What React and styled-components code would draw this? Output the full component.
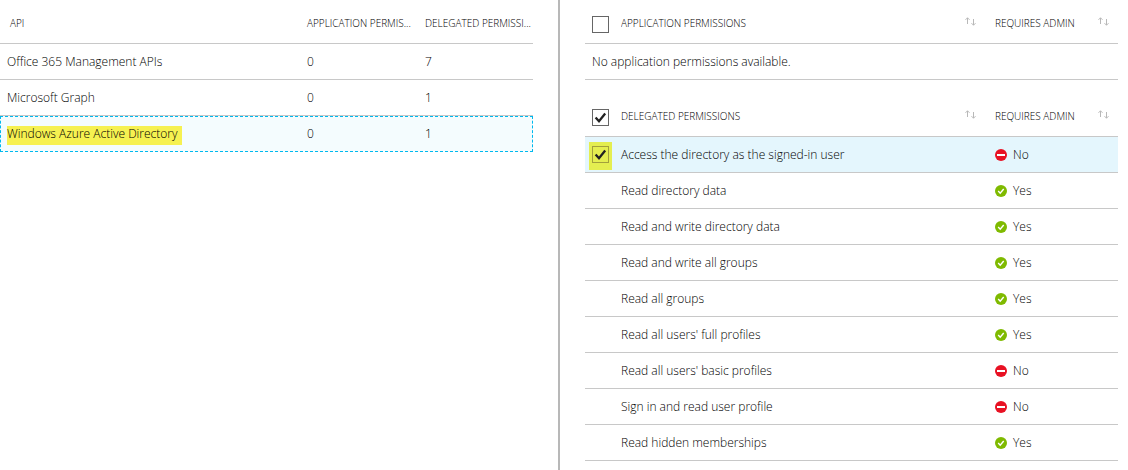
import React from "react";
import styled, { createGlobalStyle } from "styled-components";

const GlobalStyle = createGlobalStyle`
  * { box-sizing: border-box; }
  body {
    margin: 0;
    background: #fff;
    color: #000;
    font-family: "Open Sans", "Noto Sans", sans-serif;
    font-size: 12px;
    font-weight: 300;
    line-height: 16px;
  }
`;

const Layout = styled.main`
  display: grid;
  grid-template-columns: minmax(0, 560fr) minmax(0, 568fr);
  min-height: 100vh;
`;

const Panel = styled.section`
  padding: ${(p) => (p.$side === "left" ? "0 25px 0 0" : "0 10px 0 25px")};
  border-right: ${(p) => (p.$side === "left" ? "2px solid #b8b8b8" : "0")};
`;

const Table = styled.table`
  width: 100%;
  table-layout: fixed;
  border-collapse: separate;
  border-spacing: 0;
  margin-bottom: 13px;
`;

const Col = styled.col`
  width: ${(p) => p.$width || "auto"};
`;

const HeadCell = styled.th`
  height: 44px;
  padding: ${(p) => (p.$check ? "6px" : "3px")} ${(p) => p.$end || "4px"} 0 ${(p) => p.$indent || "7px"};
  border-bottom: 1px solid #c8c8c8;
  font-size: 10px;
  font-weight: 300;
  text-align: left;
  white-space: nowrap;
  overflow: hidden;
  text-overflow: ellipsis;
`;

const Cell = styled.td`
  height: 36px;
  padding: ${(p) => (p.$check ? "2px" : "0")} ${(p) => p.$indent || "7px"} 0;
  border-bottom: 1px solid #c8c8c8;
`;

const Row = styled.tr`
  background: ${(p) => (p.$selected ? "#e4f6fd" : "transparent")};
`;

const FocusedRow = styled.tr`
  background: #f4fcfe;
  outline: 1px dashed #00b9ee;
  outline-offset: -1px;

  ${Cell} { border-bottom-color: transparent; }
`;

const Highlight = styled.mark`
  display: inline-block;
  margin-bottom: -3px;
  padding: 0 4px 3px 0;
  background: #f6f151;
  color: inherit;
  vertical-align: top;
`;

const HeadContent = styled.div`
  display: flex;
  align-items: center;
  justify-content: space-between;
`;

const SortButton = styled.button`
  display: flex;
  padding: 0 0 3px;
  border: 0;
  background: none;
  color: #b8b8b8;
`;

const CheckLabel = styled.label`
  display: flex;
  width: max-content;
  padding: ${(p) => (p.$marked ? "4px 3px 7px" : "0 3px")};
  background: ${(p) => (p.$marked ? "#e4ee50" : "transparent")};
`;

const CheckFrame = styled.span`
  display: grid;
  width: 17px;
  height: 17px;

  > * { grid-area: 1 / 1; }
  > svg { pointer-events: none; }
  > input:not(:checked) + svg { visibility: hidden; }
`;

const CheckInput = styled.input`
  appearance: none;
  width: 17px;
  height: 17px;
  margin: 0;
  border: 1px solid ${(p) => (p.$marked ? "#a2a03c" : "#666")};
  background: ${(p) => (p.$marked ? "transparent" : "#fff")};
`;

const Status = styled.span`
  display: flex;
  align-items: center;
  gap: 6px;
`;

function SortIcon() {
  return (
    <SortButton type="button" aria-label="Sort">
      <svg width="11" height="9" viewBox="0 0 11 9" fill="none" stroke="currentColor">
        <path d="M2.5 7V.8M.5 2.8l2-2 2 2M8.5 2v6.2M6.5 6.2l2 2 2-2" />
      </svg>
    </SortButton>
  );
}

function Checkbox({ label, checked, marked }) {
  return (
    <CheckLabel $marked={marked}>
      <CheckFrame>
        <CheckInput type="checkbox" aria-label={label} defaultChecked={checked} $marked={marked} />
        <svg width="17" height="17" viewBox="0 0 17 17" fill="none" stroke="#222" strokeWidth="2.3">
          <path d="M3.6 8.4l3.4 3.8 6.2-7.6" />
        </svg>
      </CheckFrame>
    </CheckLabel>
  );
}

function AdminStatus({ required }) {
  return (
    <Status>
      <svg width="12" height="12" viewBox="0 0 12 12" fill="none" stroke="#fff">
        <circle cx="6" cy="6" r="6" fill={required ? "#7fba00" : "#e81123"} stroke="none" />
        {required ? (
          <path d="M3.2 6.1l2 2.1 3.5-4.2" strokeWidth="1.4" />
        ) : (
          <path d="M2 6h8" strokeWidth="2" />
        )}
      </svg>
      {required ? "Yes" : "No"}
    </Status>
  );
}

const apis = [
  { name: "Office 365 Management APIs", app: 0, delegated: 7 },
  { name: "Microsoft Graph", app: 0, delegated: 1 },
  { name: "Windows Azure Active Directory", app: 0, delegated: 1, focused: true },
];

const delegatedPermissions = [
  { name: "Access the directory as the signed-in user", admin: false, selected: true },
  { name: "Read directory data", admin: true },
  { name: "Read and write directory data", admin: true },
  { name: "Read and write all groups", admin: true },
  { name: "Read all groups", admin: true },
  { name: "Read all users' full profiles", admin: true },
  { name: "Read all users' basic profiles", admin: false },
  { name: "Sign in and read user profile", admin: false },
  { name: "Read hidden memberships", admin: true },
];

function ApiTable() {
  return (
    <Table>
      <colgroup>
        <Col />
        <Col $width="118px" />
        <Col $width="115px" />
      </colgroup>
      <thead>
        <tr>
          <HeadCell $indent="10px">API</HeadCell>
          <HeadCell $end="0" title="APPLICATION PERMISSIONS">APPLICATION PERMIS...</HeadCell>
          <HeadCell $end="0" title="DELEGATED PERMISSIONS">DELEGATED PERMISSI...</HeadCell>
        </tr>
      </thead>
      <tbody>
        {apis.map((api) => {
          const ApiRow = api.focused ? FocusedRow : Row;
          return (
            <ApiRow key={api.name}>
              <Cell>{api.focused ? <Highlight>{api.name}</Highlight> : api.name}</Cell>
              <Cell>{api.app}</Cell>
              <Cell>{api.delegated}</Cell>
            </ApiRow>
          );
        })}
      </tbody>
    </Table>
  );
}

function PermissionTable({ title, checked, children }) {
  return (
    <Table>
      <colgroup>
        <Col $width="36px" />
        <Col />
        <Col $width="130px" />
      </colgroup>
      <thead>
        <tr>
          <HeadCell $check $indent="4px">
            <Checkbox label={`Select all: ${title}`} checked={checked} />
          </HeadCell>
          <HeadCell $indent="0" $end="12px">
            <HeadContent>
              {title}
              <SortIcon />
            </HeadContent>
          </HeadCell>
          <HeadCell $end="9px">
            <HeadContent>
              REQUIRES ADMIN
              <SortIcon />
            </HeadContent>
          </HeadCell>
        </tr>
      </thead>
      <tbody>{children}</tbody>
    </Table>
  );
}

export default function App() {
  return (
    <>
      <GlobalStyle />
      <Layout>
        <Panel $side="left">
          <ApiTable />
        </Panel>
        <Panel $side="right">
          <PermissionTable title="APPLICATION PERMISSIONS">
            <Row>
              <Cell colSpan={3}>No application permissions available.</Cell>
            </Row>
          </PermissionTable>
          <PermissionTable title="DELEGATED PERMISSIONS" checked>
            {delegatedPermissions.map((p) => (
              <Row key={p.name} $selected={p.selected}>
                <Cell $check $indent="4px">
                  {p.selected && <Checkbox label={p.name} checked marked />}
                </Cell>
                <Cell $indent="0">{p.name}</Cell>
                <Cell>
                  <AdminStatus required={p.admin} />
                </Cell>
              </Row>
            ))}
          </PermissionTable>
        </Panel>
      </Layout>
    </>
  );
}
